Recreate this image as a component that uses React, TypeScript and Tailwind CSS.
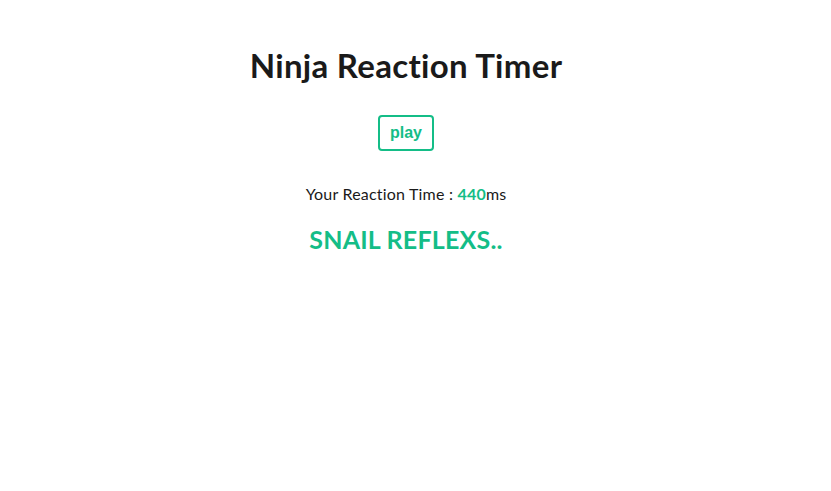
export default function App() {
  return (
    <div className="min-h-[491px] w-[812px] bg-white text-center" style={{ fontFamily: "Lato, 'Noto Sans', sans-serif" }}>
      <div className="pt-[45px] flex flex-col items-center">
        <h1 className="text-[33px] font-bold leading-[40px] tracking-[0.3px] text-[#1a1a1a]">Ninja Reaction Timer</h1>
        <button
          className="mt-[30px] h-[36px] w-[56px] rounded-[4px] border-2 border-[#14bd87] text-[16px] font-bold text-[#14bd87]"
          style={{ fontFamily: "'Liberation Sans', Arial, sans-serif" }}
        >
          play
        </button>
        <p className="mt-[33px] text-[16px] leading-[20px] tracking-[0.2px] text-[#1a1a1a]">
          Your Reaction Time : <span className="font-bold text-[#14bd87]">440</span>ms
        </p>
        <p className="mt-[20px] text-[25px] font-bold leading-[30px] tracking-[0.2px] text-[#14bd87]">SNAIL REFLEXS..</p>
      </div>
    </div>
  );
}
